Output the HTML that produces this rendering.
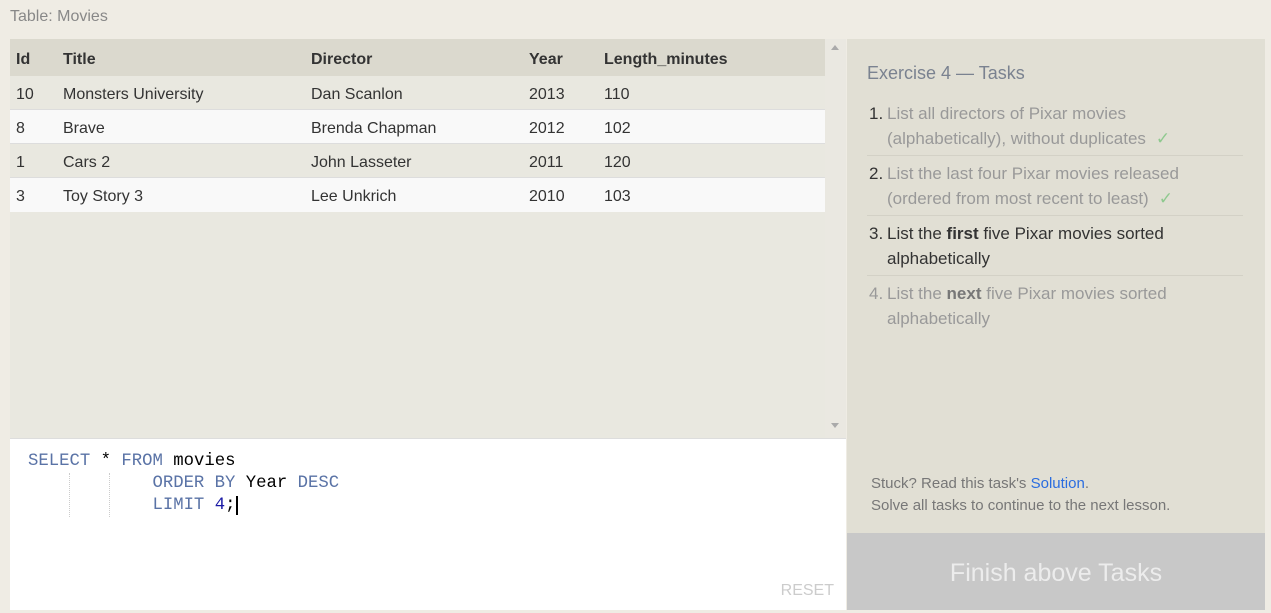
<!DOCTYPE html>
<html><head><style>
*{margin:0;padding:0;box-sizing:border-box}
body{width:1271px;height:612px;background:#efece4;font-family:"Liberation Sans",sans-serif;position:relative;overflow:hidden;color:#333}
.title{position:absolute;left:10px;top:8px;font-size:16px;color:#888}
.left{position:absolute;left:10px;top:39px;width:836px;height:399px;background:#e9e8e0}
.row{position:absolute;left:0;width:815px;height:34px;font-size:16px;line-height:37px}
.row span{position:absolute;top:0}
.hd{background:#dbd9ce;font-weight:bold;height:37px;line-height:41px;top:0}
.c1{left:6px}.c2{left:53px}.c3{left:301px}.c4{left:519px}.c5{left:594px}
.sb{position:absolute;left:815px;top:0;width:21px;height:399px;background:#eae8e1}
.ed{position:absolute;left:10px;top:438px;width:836px;height:172px;background:#fff;border-top:1px solid #ddd}
.code{position:absolute;left:18px;top:12px;font-family:"Liberation Mono",monospace;font-size:17.3px;line-height:22px;white-space:pre;color:#000}
.k{color:#5a73a6}.n{color:#1a1aa6}
.guide{position:absolute;border-left:1px dotted #ccc;top:34px;height:44px}
.right{position:absolute;left:847px;top:39px;width:418px;height:494px;background:#e1dfd4}
.btn{position:absolute;left:847px;top:533px;width:418px;height:77px;background:#c8c8c8;color:#ececec;font-size:25px;text-align:center;line-height:80px}
ol{position:absolute;left:20px;top:62px;width:376px;list-style:none;font-size:17px;line-height:25px}
li{position:relative;padding-left:20px;padding-bottom:4px;margin-bottom:5px;border-bottom:1px solid #d3d1c6;color:#999}
li b{color:#777}
li .num{position:absolute;left:2px;color:#333}
.ck{color:#8fc98f;margin-left:10px}
</style></head><body>
<div class="title">Table: Movies</div>
<div class="left">
<div class="row hd"><span class="c1">Id</span><span class="c2">Title</span><span class="c3">Director</span><span class="c4">Year</span><span class="c5">Length_minutes</span></div>
<div class="row" style="top:37px;background:#e9e8e0;border-bottom:1px solid #ddd"><span class="c1">10</span><span class="c2">Monsters University</span><span class="c3">Dan Scanlon</span><span class="c4">2013</span><span class="c5">110</span></div>
<div class="row" style="top:71px;background:#f9f9f9;border-bottom:1px solid #ddd"><span class="c1">8</span><span class="c2">Brave</span><span class="c3">Brenda Chapman</span><span class="c4">2012</span><span class="c5">102</span></div>
<div class="row" style="top:105px;background:#e9e8e0;border-bottom:1px solid #ddd"><span class="c1">1</span><span class="c2">Cars 2</span><span class="c3">John Lasseter</span><span class="c4">2011</span><span class="c5">120</span></div>
<div class="row" style="top:139px;background:#f9f9f9"><span class="c1">3</span><span class="c2">Toy Story 3</span><span class="c3">Lee Unkrich</span><span class="c4">2010</span><span class="c5">103</span></div>
<div class="sb"><div style="position:absolute;left:6px;top:6px;border:4px solid transparent;border-bottom:5px solid #aaa;border-top:0"></div><div style="position:absolute;left:6px;top:384px;border:4px solid transparent;border-top:5px solid #aaa;border-bottom:0"></div></div>
</div>
<div class="ed">
<div class="guide" style="left:59px"></div><div class="guide" style="left:99px"></div>
<div class="code"><span class="k">SELECT</span> * <span class="k">FROM</span> movies
            <span class="k">ORDER BY</span> Year <span class="k">DESC</span>
            <span class="k">LIMIT</span> <span class="n">4</span>;<span style="border-left:2px solid #000;margin-left:1px"></span></div>
<div style="position:absolute;right:12px;bottom:10px;color:#ccc;font-size:16px">RESET</div>
</div>
<div class="right">
<div style="position:absolute;left:20px;top:24px;font-size:18px;color:#7a8290">Exercise 4 — Tasks</div>
<ol>
<li><span class="num">1.</span>List all directors of Pixar movies (alphabetically), without duplicates<span class="ck">✓</span></li>
<li><span class="num">2.</span>List the last four Pixar movies released (ordered from most recent to least)<span class="ck">✓</span></li>
<li style="color:#333"><span class="num">3.</span>List the <b style="color:#333">first</b> five Pixar movies sorted alphabetically</li>
<li style="border:0"><span class="num" style="color:#999">4.</span>List the <b>next</b> five Pixar movies sorted alphabetically</li>
</ol>
<div style="position:absolute;left:24px;top:434px;font-size:15px;line-height:22px;color:#777">Stuck? Read this task's <span style="color:#2a6de0">Solution</span>.<br>Solve all tasks to continue to the next lesson.</div>
</div>
<div class="btn">Finish above Tasks</div>
</body></html>
